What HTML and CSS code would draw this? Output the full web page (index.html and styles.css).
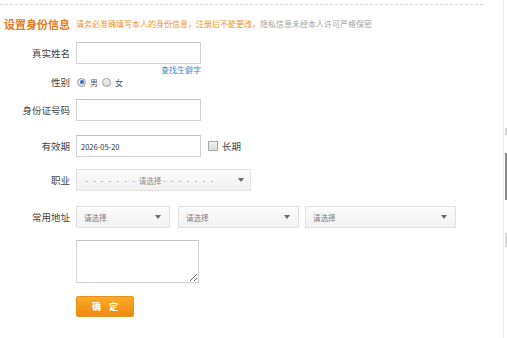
FILE: index.html
```html
<!DOCTYPE html>
<html lang="zh-CN">
<head>
<meta charset="utf-8">
<title>设置身份信息</title>
<link rel="stylesheet" href="styles.css">
</head>
<body>
<div class="page">
  <div class="topline"></div>
  <div class="head">
    <h2 class="title">设置身份信息</h2>
    <p class="sub"><span class="warn">请务必准确填写本人的身份信息，注册后不能更改，</span><span class="muted">隐私信息未经本人许可严格保密</span></p>
  </div>

  <div class="row r-name">
    <span class="lbl">真实姓名</span>
    <input class="txt" type="text">
  </div>
  <div class="row r-link">
    <span class="lbl"></span>
    <a class="rare" href="#">查找生僻字</a>
  </div>
  <div class="row r-sex">
    <span class="lbl">性别</span>
    <span class="radio on"></span><span class="opt">男</span>
    <span class="radio"></span><span class="opt">女</span>
  </div>
  <div class="row r-id">
    <span class="lbl">身份证号码</span>
    <input class="txt" type="text">
  </div>
  <div class="row r-date">
    <span class="lbl">有效期</span>
    <input class="txt date" type="text" value="2026-05-20">
    <span class="check"></span><span class="long">长期</span>
  </div>
  <div class="row r-job">
    <span class="lbl">职业</span>
    <div class="sel job"><span class="dash">- - - - - - -</span><span class="jtext">请选择</span><span class="dash dash2">- - - - - - -</span><span class="arrow"></span></div>
  </div>
  <div class="row r-addr">
    <span class="lbl">常用地址</span>
    <div class="sel s1"><span class="stext">请选择</span><span class="arrow"></span></div>
    <div class="sel s2"><span class="stext">请选择</span><span class="arrow"></span></div>
    <div class="sel s3"><span class="stext">请选择</span><span class="arrow"></span></div>
  </div>
  <div class="row r-area">
    <span class="lbl"></span>
    <textarea class="area"></textarea>
  </div>
  <div class="row r-btn">
    <span class="lbl"></span>
    <button class="ok" type="button">确定</button>
  </div>
</div>
<div class="gutter"><div class="nub"></div><div class="thumb"></div><div class="nub2"></div></div>
</body>
</html>
```

FILE: styles.css
```css
html, body {
  margin: 0;
  padding: 0;
  width: 507px;
  height: 338px;
  overflow: hidden;
  background: #fff;
}
body {
  display: flex;
  font-family: "Noto Sans CJK SC", "Noto Sans", sans-serif;
  color: #3a3a3a;
}
.page {
  width: 503px;
  flex: none;
}
.gutter {
  width: 3px;
  border-left: 1px solid #ececec;
  flex: none;
}
.nub {
  margin-top: 128px;
  margin-left: 1px;
  width: 2px;
  height: 7px;
  background: #d6d6d6;
}
.thumb {
  margin-top: 18px;
  margin-left: 1px;
  width: 2px;
  height: 47px;
  background: #8a8a8a;
}
.nub2 {
  margin-top: 33px;
  margin-left: 1px;
  width: 2px;
  height: 14px;
  background: #dadada;
}
.topline {
  margin-top: 4px;
  width: 483px;
  border-top: 1px dashed #d9d9d9;
}
.head {
  margin-top: 11px;
  height: 16px;
  display: flex;
  align-items: center;
  padding-left: 4px;
}
.title {
  margin: 0;
  width: 72px;
  font-size: 11px;
  font-weight: bold;
  color: #e27b22;
  line-height: 16px;
  white-space: nowrap;
}
.sub {
  margin: 0;
  font-size: 8px;
  line-height: 16px;
  white-space: nowrap;
}
.warn { color: #ee9035; }
.muted { color: #a3a3a3; }

.row {
  display: flex;
  align-items: center;
}
.lbl {
  width: 70px;
  margin-right: 6px;
  text-align: right;
  font-size: 9.5px;
  color: #444;
  flex: none;
  white-space: nowrap;
}
.txt {
  box-sizing: border-box;
  width: 125px;
  height: 22px;
  margin: 0;
  border: 1px solid #d2d2d2;
  border-top-color: #c2c2c2;
  background: #fff;
  padding: 0 4px;
  font-family: inherit;
  font-size: 7.5px;
  color: #333;
  outline: none;
}
.r-name { margin-top: 10px; height: 22px; }
.r-link { margin-top: 1px; height: 10px; }
.rare {
  width: 125px;
  text-align: right;
  font-size: 8px;
  line-height: 10px;
  color: #3d8ccc;
  text-decoration: none;
}
.r-sex { margin-top: 1px; height: 12px; }
.radio {
  box-sizing: border-box;
  width: 9px;
  height: 9px;
  margin-left: 1px;
  border-radius: 50%;
  border: 1px solid #9a9a9a;
  background: linear-gradient(#f4f4f4, #dcdcdc);
  position: relative;
  flex: none;
}
.radio.on::after {
  content: "";
  position: absolute;
  left: 1.5px;
  top: 1.5px;
  width: 4px;
  height: 4px;
  border-radius: 50%;
  background: #2f6fcf;
}
.opt {
  font-size: 8px;
  color: #555;
  margin-left: 4px;
  margin-right: 3px;
}
.r-id { margin-top: 11px; height: 22px; }
.r-date { margin-top: 14px; height: 22px; }
.check {
  box-sizing: border-box;
  width: 10px;
  height: 10px;
  margin-left: 7px;
  border: 1px solid #a8a8a8;
  background: linear-gradient(#f2f2f2, #dadada);
  flex: none;
}
.long {
  margin-left: 4px;
  font-size: 9.5px;
  color: #444;
}
.r-job { margin-top: 12px; height: 22px; }
.sel {
  box-sizing: border-box;
  height: 22px;
  border: 1px solid #e2e2e2;
  background: linear-gradient(#fbfbfb, #f1f1f1);
  display: flex;
  align-items: center;
  flex: none;
  position: relative;
}
.stext {
  font-size: 7.5px;
  color: #808080;
  padding-left: 7px;
  white-space: nowrap;
}
.job { width: 175px; }
.dash {
  font-size: 7.5px;
  color: #8c8c8c;
  letter-spacing: 1.8px;
  white-space: nowrap;
  padding-left: 8px;
}
.dash2 { padding-left: 2px; }
.jtext {
  font-size: 7.5px;
  color: #8c8c8c;
  padding-left: 2px;
  white-space: nowrap;
}
.arrow {
  margin-left: auto;
  margin-right: 8px;
  width: 0;
  height: 0;
  border-left: 3.5px solid transparent;
  border-right: 3.5px solid transparent;
  border-top: 4px solid #6a6a6a;
}
.job .arrow { margin-right: 6px; }
.r-addr { margin-top: 15px; height: 22px; }
.s1 { width: 94px; }
.s2 { width: 121px; margin-left: 8px; }
.s3 { width: 151px; margin-left: 6px; }
.r-area { margin-top: 12px; }
.area {
  display: block;
  box-sizing: border-box;
  width: 123px;
  height: 43px;
  margin: 0;
  border: 1px solid #d4d4d4;
  border-top-color: #c4c4c4;
  background: #fff;
  outline: none;
}
.r-btn { margin-top: 13px; }
.ok {
  box-sizing: border-box;
  width: 58px;
  height: 21px;
  margin: 0;
  padding: 0 0 0 8px;
  border: 1px solid #e8901c;
  border-radius: 2px;
  background: linear-gradient(#f8aa28, #ee8a12);
  color: #fff;
  font-family: inherit;
  font-size: 9px;
  font-weight: bold;
  letter-spacing: 8px;
  line-height: 19px;
}
```
